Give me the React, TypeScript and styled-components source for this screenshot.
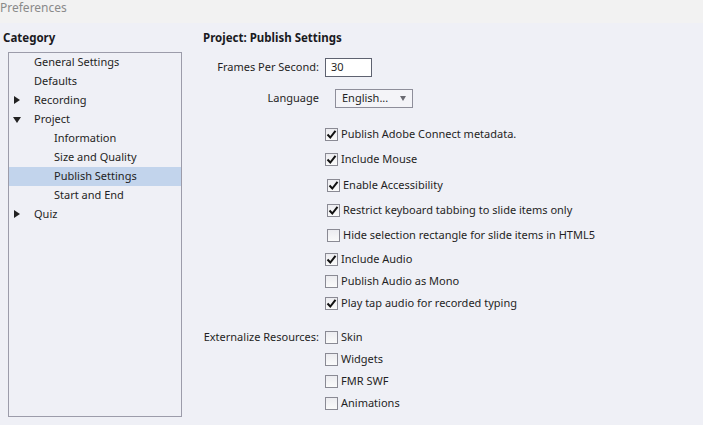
import React from "react";
import styled, {createGlobalStyle} from "styled-components";

const GlobalStyle = createGlobalStyle`
    html, body {
        margin: 0;
        padding: 0;
        background: #eff0f6;
    }
    body {
        font-family: "Noto Sans", "Liberation Sans", sans-serif;
        font-size: 11px;
        color: #1f1f24;
        width: 703px;
        height: 425px;
        overflow: hidden;
    }
`

const Window = styled.div`
    width: 703px;
    height: 425px;
    display: flex;
    flex-direction: column;
    background: #eff0f6;
`

const TitleBar = styled.div`
    height: 23px;
    background: #f2f2f2;
    color: #8a8a8a;
    font-size: 12px;
    line-height: 16px;
    padding-left: 0;
    box-sizing: border-box;
`

const Body = styled.div`
    flex: 1;
    display: flex;
    padding-top: 7px;
`

const Sidebar = styled.div`
    width: 200px;
    display: flex;
    flex-direction: column;
`

const Heading = styled.div<{ indent: number }>`
    font-weight: bold;
    font-size: 11.5px;
    line-height: 16px;
    padding-left: ${p => p.indent}px;
    color: #1a1a1e;
`

const TreeBox = styled.div`
    margin: 6px 0 0 8px;
    width: 174px;
    height: 365px;
    box-sizing: border-box;
    border: 1px solid #9c9caa;
`

const TreeRow = styled.div<{ level: number, selected?: boolean }>`
    height: 19px;
    box-sizing: border-box;
    display: flex;
    align-items: center;
    position: relative;
    padding-left: ${p => p.level === 1 ? 25 : 45}px;
    padding-bottom: 3px;
    background: ${p => p.selected ? "#c2d4ec" : "transparent"};
`

const Arrow = styled.span<{ open?: boolean }>`
    position: absolute;
    left: 5px;
    top: 5px;
    width: 0;
    height: 0;
    ${p => p.open ? `
        border-left: 4px solid transparent;
        border-right: 4px solid transparent;
        border-top: 6px solid #222;
        top: 7px;
        left: 4px;
    ` : `
        border-top: 4px solid transparent;
        border-bottom: 4px solid transparent;
        border-left: 6px solid #222;
    `}
`

const Main = styled.div`
    flex: 1;
    display: flex;
    flex-direction: column;
    padding-left: 3px;
`

const FormRow = styled.div<{ space: number }>`
    display: grid;
    grid-template-columns: 116px 1fr;
    column-gap: 6px;
    align-items: center;
    height: 20px;
    margin-top: ${p => p.space}px;
`

const Label = styled.div`
    text-align: right;
    white-space: nowrap;
    padding-bottom: 1px;
`

const NumberInput = styled.div`
    width: 47px;
    height: 19px;
    box-sizing: border-box;
    border: 1px solid #5e6270;
    background: #fff;
    padding-left: 5px;
    line-height: 16px;
`

const Dropdown = styled.div`
    margin-left: 10px;
    width: 78px;
    height: 19px;
    box-sizing: border-box;
    border: 1px solid #8e8e9a;
    background: #f4f4f8;
    display: flex;
    align-items: center;
    justify-content: space-between;
    padding: 0 6px 1px 6px;
`

const DropArrow = styled.span`
    width: 0;
    height: 0;
    margin-top: 1px;
    border-left: 3.5px solid transparent;
    border-right: 3.5px solid transparent;
    border-top: 5px solid #6a6a72;
`

const Check = styled.div<{ shift?: boolean }>`
    display: flex;
    align-items: center;
    gap: 3px;
    margin-left: ${p => p.shift ? 2 : 0}px;
    white-space: nowrap;

    span:last-child {
        padding-bottom: 1px;
    }
`

const Box = styled.span`
    width: 13px;
    height: 13px;
    box-sizing: border-box;
    border: 1px solid #8a8a94;
    background: linear-gradient(#ececf0, #fafafa);
    display: flex;
    align-items: center;
    justify-content: center;
`

function CheckBox({label, checked, shift}: { label: string, checked?: boolean, shift?: boolean }) {
    return (
        <Check shift={shift}>
            <Box>
                {checked && (
                    <svg width="11" height="11" viewBox="0 0 11 11">
                        <path d="M1.5 5.5 L4.3 8.5 L9.5 1.8" fill="none" stroke="#111" strokeWidth="2"/>
                    </svg>
                )}
            </Box>
            <span>{label}</span>
        </Check>
    )
}

const tree = [
    {label: "General Settings", level: 1},
    {label: "Defaults", level: 1},
    {label: "Recording", level: 1, arrow: "closed"},
    {label: "Project", level: 1, arrow: "open"},
    {label: "Information", level: 2},
    {label: "Size and Quality", level: 2},
    {label: "Publish Settings", level: 2, selected: true},
    {label: "Start and End", level: 2},
    {label: "Quiz", level: 1, arrow: "closed"},
]

const options = [
    {label: "Publish Adobe Connect metadata.", checked: true, space: 16},
    {label: "Include Mouse", checked: true, space: 5},
    {label: "Enable Accessibility", checked: true, space: 6, shift: true},
    {label: "Restrict keyboard tabbing to slide items only", checked: true, space: 5, shift: true},
    {label: "Hide selection rectangle for slide items in HTML5", space: 5, shift: true},
    {label: "Include Audio", checked: true, space: 4},
    {label: "Publish Audio as Mono", space: 2},
    {label: "Play tap audio for recorded typing", checked: true, space: 2},
]

const resources = ["Skin", "Widgets", "FMR SWF", "Animations"]

function App() {
    return (
        <Window>
            <GlobalStyle/>
            <TitleBar>Preferences</TitleBar>
            <Body>
                <Sidebar>
                    <Heading indent={3}>Category</Heading>
                    <TreeBox>
                        {tree.map(item => (
                            <TreeRow key={item.label} level={item.level} selected={item.selected}>
                                {item.arrow && <Arrow open={item.arrow === "open"}/>}
                                {item.label}
                            </TreeRow>
                        ))}
                    </TreeBox>
                </Sidebar>
                <Main>
                    <Heading indent={0}>Project: Publish Settings</Heading>
                    <FormRow space={11}>
                        <Label>Frames Per Second:</Label>
                        <NumberInput>30</NumberInput>
                    </FormRow>
                    <FormRow space={11}>
                        <Label>Language</Label>
                        <Dropdown>English... <DropArrow/></Dropdown>
                    </FormRow>
                    {options.map(o => (
                        <FormRow key={o.label} space={o.space}>
                            <span/>
                            <CheckBox label={o.label} checked={o.checked} shift={o.shift}/>
                        </FormRow>
                    ))}
                    {resources.map((r, i) => (
                        <FormRow key={r} space={i === 0 ? 14 : 2}>
                            {i === 0 ? <Label>Externalize Resources:</Label> : <span/>}
                            <CheckBox label={r}/>
                        </FormRow>
                    ))}
                </Main>
            </Body>
        </Window>
    )
}

export default App
